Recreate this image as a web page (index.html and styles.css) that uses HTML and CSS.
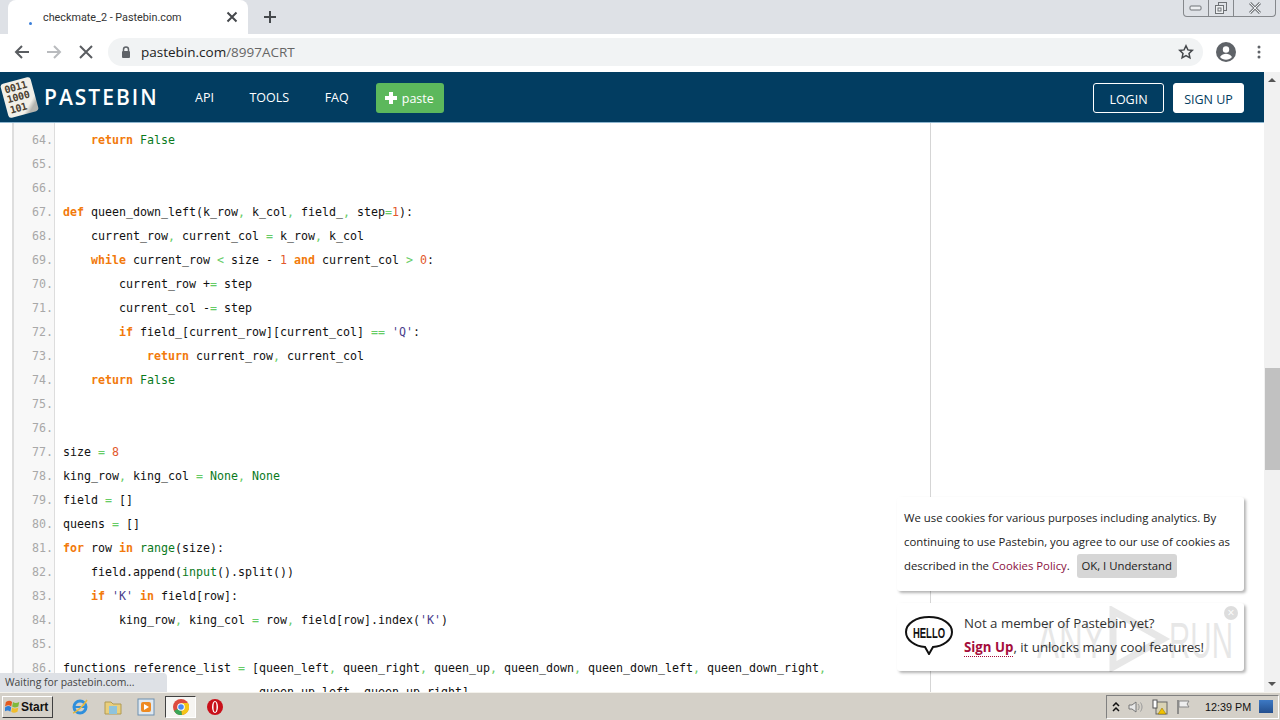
FILE: index.html
```html
<!DOCTYPE html>
<html>
<head>
  <meta charset="UTF-8">
  <title>checkmate_2 - Pastebin.com</title>
  <link rel="stylesheet" href="styles.css">
</head>
<body>
  <div class="tabstrip">
    <div class="tab">
      <span class="tab-spinner"></span>
      <span class="tab-title">checkmate_2 - Pastebin.com</span>
      <svg class="tab-close" width="12" height="12" viewBox="0 0 12 12"><path d="M1.5 1.5l9 9M10.5 1.5l-9 9" stroke="#45484c" stroke-width="2"/></svg>
    </div>
    <svg class="new-tab" width="14" height="14" viewBox="0 0 14 14"><path d="M7 1v12M1 7h12" stroke="#45484c" stroke-width="2"/></svg>
    <div class="window-buttons">
      <span class="win-btn"><svg width="14" height="8" viewBox="0 0 14 8"><rect x="1" y="2" width="11" height="4" rx="1" fill="#eef0f2" stroke="#6f7276"/></svg></span>
      <span class="win-btn"><svg width="14" height="14" viewBox="0 0 14 14"><rect x="4.5" y="1.5" width="8" height="8" fill="none" stroke="#6f7276"/><rect x="1.5" y="4.5" width="8" height="8" fill="#eef0f2" stroke="#6f7276"/><rect x="4" y="7" width="3" height="3" fill="none" stroke="#6f7276"/></svg></span>
      <span class="win-btn wide"><svg width="14" height="12" viewBox="0 0 14 12"><path d="M2 1l10 10M12 1L2 11" stroke="#7d8084" stroke-width="3"/><path d="M2 1l10 10M12 1L2 11" stroke="#eef0f2" stroke-width="1"/></svg></span>
    </div>
  </div>

  <div class="toolbar">
    <svg class="nav-icon" width="16" height="16" viewBox="0 0 16 16"><path d="M15 8H2M8 2L2 8l6 6" fill="none" stroke="#5a5d61" stroke-width="2"/></svg>
    <svg class="nav-icon" width="16" height="16" viewBox="0 0 16 16"><path d="M1 8h13M8 2l6 6-6 6" fill="none" stroke="#b9bbbe" stroke-width="2"/></svg>
    <svg class="nav-icon" width="16" height="16" viewBox="0 0 16 16"><path d="M2 2l12 12M14 2L2 14" stroke="#5a5d61" stroke-width="2"/></svg>
    <div class="omnibox">
      <svg class="lock" width="12" height="14" viewBox="0 0 12 14"><path d="M3.500 6V4.500a2.500 2.500 0 0 1 5 0V6" fill="none" stroke="#5f6368" stroke-width="1.5"/><rect x="2" y="6" width="8" height="7" rx="1" fill="#5f6368"/></svg>
      <span class="url">pastebin.com<span class="url-path">/8997ACRT</span></span>
      <svg class="star" width="16" height="16" viewBox="0 0 16 16"><path d="M8 1.8l1.9 4.1 4.4.5-3.3 3 .9 4.4L8 11.6l-3.9 2.2.9-4.4-3.3-3 4.4-.5z" fill="none" stroke="#45484c" stroke-width="1.5"/></svg>
    </div>
    <svg class="avatar" width="20" height="20" viewBox="0 0 20 20"><circle cx="10" cy="10" r="10" fill="#5f6368"/><circle cx="10" cy="7.5" r="3.2" fill="#fff"/><path d="M4 15c1.5-2.6 3.8-3.3 6-3.3s4.500.7 6 3.300c-1.500 1.700-3.600 2.700-6 2.700s-4.500-1-6-2.700z" fill="#fff"/></svg>
    <svg class="menu-dots" width="4" height="14" viewBox="0 0 4 14"><circle cx="2" cy="2" r="1.500" fill="#5f6368"/><circle cx="2" cy="7" r="1.500" fill="#5f6368"/><circle cx="2" cy="12" r="1.500" fill="#5f6368"/></svg>
  </div>

  <div class="viewport">
    <div class="page">
      <div class="site-header">
        <div class="logo">
          <div class="logo-mark"><span>0011</span><span>1000</span><span>101</span></div>
          <span class="logo-text">PASTEBIN</span>
        </div>
        <nav class="site-nav">
          <a>API</a>
          <a>TOOLS</a>
          <a>FAQ</a>
        </nav>
        <a class="paste-btn"><svg width="14" height="14" viewBox="0 0 14 14"><path d="M7 1v12M1 7h12" stroke="#fff" stroke-width="4"/></svg>paste</a>
        <div class="account">
          <a class="login-btn">LOGIN</a>
          <a class="signup-btn">SIGN UP</a>
        </div>
      </div>

      <div class="page-body">
        <div class="code-box">
          <div class="line"><span class="num">64.</span><code>    <b>return</b> <i>False</i></code></div>
          <div class="line"><span class="num">65.</span><code></code></div>
          <div class="line"><span class="num">66.</span><code></code></div>
          <div class="line"><span class="num">67.</span><code><b>def</b> queen_down_left(k_row<u>,</u> k_col<u>,</u> field_<u>,</u> step<u>=</u><em>1</em>):</code></div>
          <div class="line"><span class="num">68.</span><code>    current_row<u>,</u> current_col <u>=</u> k_row<u>,</u> k_col</code></div>
          <div class="line"><span class="num">69.</span><code>    <b>while</b> current_row <u>&lt;</u> size - <em>1</em> <b>and</b> current_col <u>&gt;</u> <em>0</em>:</code></div>
          <div class="line"><span class="num">70.</span><code>        current_row +<u>=</u> step</code></div>
          <div class="line"><span class="num">71.</span><code>        current_col -<u>=</u> step</code></div>
          <div class="line"><span class="num">72.</span><code>        <b>if</b> field_[current_row][current_col] <u>==</u> <s>'Q'</s>:</code></div>
          <div class="line"><span class="num">73.</span><code>            <b>return</b> current_row<u>,</u> current_col</code></div>
          <div class="line"><span class="num">74.</span><code>    <b>return</b> <i>False</i></code></div>
          <div class="line"><span class="num">75.</span><code></code></div>
          <div class="line"><span class="num">76.</span><code></code></div>
          <div class="line"><span class="num">77.</span><code>size <u>=</u> <em>8</em></code></div>
          <div class="line"><span class="num">78.</span><code>king_row<u>,</u> king_col <u>=</u> <i>None</i><u>,</u> <i>None</i></code></div>
          <div class="line"><span class="num">79.</span><code>field <u>=</u> []</code></div>
          <div class="line"><span class="num">80.</span><code>queens <u>=</u> []</code></div>
          <div class="line"><span class="num">81.</span><code><b>for</b> row <b>in</b> <i>range</i>(size):</code></div>
          <div class="line"><span class="num">82.</span><code>    field.append(<i>input</i>().split())</code></div>
          <div class="line"><span class="num">83.</span><code>    <b>if</b> <s>'K'</s> <b>in</b> field[row]:</code></div>
          <div class="line"><span class="num">84.</span><code>        king_row<u>,</u> king_col <u>=</u> row<u>,</u> field[row].index(<s>'K'</s>)</code></div>
          <div class="line"><span class="num">85.</span><code></code></div>
          <div class="line"><span class="num">86.</span><code>functions_reference_list <u>=</u> [queen_left<u>,</u> queen_right<u>,</u> queen_up<u>,</u> queen_down<u>,</u> queen_down_left<u>,</u> queen_down_right<u>,</u></code></div>
          <div class="line"><span class="num"></span><code>                            queen_up_left<u>,</u> queen_up_right]</code></div>
        </div>
        <div class="sidebar"></div>
      </div>

      <div class="notice cookie-notice">
        We use cookies for various purposes including analytics. By continuing to use Pastebin, you agree to our use of cookies as described in the <a class="cookie-link">Cookies Policy</a>. <span class="cookie-ok">OK, I Understand</span>
      </div>
      <div class="notice member-notice">
        <svg class="hello" width="50" height="40" viewBox="0 0 50 40">
          <path d="M25 2C12 2 2 8.500 2 17c0 8 9 14.500 19 15l4 7 4-7c10-.5 19-7 19-15C48 8.500 38 2 25 2z" fill="#fff" stroke="#111" stroke-width="2"/>
          <text x="25" y="23" class="hello-text" text-anchor="middle" textLength="32" lengthAdjust="spacingAndGlyphs">HELLO</text>
        </svg>
        <div>
          <div>Not a member of Pastebin yet?</div>
          <div><a class="signup-link">Sign Up</a>, it unlocks many cool features!</div>
        </div>
        <span class="notice-close">×</span>
      </div>
    </div>

    <div class="scrollbar">
      <span class="arrow-up"></span>
      <div class="scroll-track"><div class="scroll-thumb"></div></div>
      <span class="arrow-down"></span>
    </div>

    <div class="status-bubble">Waiting for pastebin.com...</div>
    <svg class="watermark" width="200" height="66" viewBox="0 0 200 66">
      <text x="0" y="52" textLength="68" lengthAdjust="spacingAndGlyphs">ANY</text>
      <path d="M76 5l50 28-50 28z" fill="none" stroke="#000" stroke-width="7"/>
      <text x="132" y="52" textLength="64" lengthAdjust="spacingAndGlyphs">RUN</text>
    </svg>
  </div>

  <div class="taskbar">
    <div class="start-btn">
      <svg width="16" height="15" viewBox="0 0 18 16">
        <path d="M1 3c3-2 5-2 7 0l-1 5c-2-2-4-2-7 0z" fill="#e2591f"/>
        <path d="M9 3c2 1.500 4 1.500 7 0l-1 5c-3 1.500-5 1.500-7 0z" fill="#7fb93a"/>
        <path d="M0 9c3-2 5-2 7 0l-1 5c-2-2-4-2-7 0z" fill="#2f7fd6"/>
        <path d="M8 9c2 1.500 4 1.500 7 0l-1 5c-3 1.500-5 1.500-7 0z" fill="#f0bd2c"/>
      </svg>
      <span>Start</span>
    </div>
    <div class="quick-launch">
      <span class="task-slot"><svg width="18" height="18" viewBox="0 0 18 18"><circle cx="9" cy="9" r="6" fill="none" stroke="#2f8fdc" stroke-width="3"/><path d="M3 9h12" stroke="#2f8fdc" stroke-width="2"/><path d="M2 15C6 14 13 7 16 2" fill="none" stroke="#e8b93c" stroke-width="1.500"/></svg></span>
      <span class="task-slot"><svg width="18" height="18" viewBox="0 0 18 18"><path d="M1 4h6l2 2h8v10H1z" fill="#e9cf7d" stroke="#b09a55"/><rect x="5" y="8" width="8" height="8" fill="#8ec3dc"/></svg></span>
      <span class="task-slot"><svg width="18" height="18" viewBox="0 0 18 18"><rect x="1" y="1" width="16" height="16" fill="#dfe8f0" stroke="#6c8fb0"/><rect x="4" y="4" width="10" height="10" rx="2" fill="#ee8a22"/><path d="M7 6l5 3-5 3z" fill="#fff"/></svg></span>
      <span class="task-slot active"><svg width="16" height="16" viewBox="0 0 16 16"><circle cx="8" cy="8" r="8" fill="#dd4b3e"/><path d="M8 8L1 12a8 8 0 0 0 8 4z" fill="#3aa757"/><path d="M8 4h7a8 8 0 0 1-6 12z" fill="#f5c518"/><circle cx="8" cy="8" r="3.800" fill="#fff"/><circle cx="8" cy="8" r="2.800" fill="#4a8af4"/></svg></span>
      <span class="task-slot"><svg width="18" height="18" viewBox="0 0 18 18"><circle cx="9" cy="9" r="8" fill="#c9101a"/><ellipse cx="9" cy="9" rx="3" ry="6" fill="#fff"/><ellipse cx="9" cy="9" rx="1.500" ry="5" fill="#c9101a"/></svg></span>
    </div>
    <div class="tray">
      <svg width="8" height="10" viewBox="0 0 8 10"><path d="M1 4l3-3 3 3M1 9l3-3 3 3" fill="none" stroke="#111" stroke-width="1.500"/></svg>
      <svg width="16" height="14" viewBox="0 0 16 14"><path d="M1 5h3l4-3v10L4 9H1z" fill="#e8e8e8" stroke="#777"/><path d="M10 4c1.500 2 1.500 4 0 6M12.500 2.500c2 3 2 6 0 9" fill="none" stroke="#999"/></svg>
      <svg width="16" height="16" viewBox="0 0 16 16"><rect x="4" y="3" width="11" height="12" fill="#d9d2b4" stroke="#666"/><rect x="1" y="1" width="4" height="8" fill="#fff" stroke="#555"/><path d="M10 9l4 6H6z" fill="#f2c200" stroke="#8a6d00" stroke-width=".5"/></svg>
      <svg width="16" height="16" viewBox="0 0 16 16"><path d="M2 1v14" stroke="#777" stroke-width="1.500"/><path d="M3 2h10l-2 3 2 3H3z" fill="#eee" stroke="#888"/></svg>
      <span class="clock">12:39 PM</span>
      <span class="show-desktop"></span>
    </div>
  </div>
</body>
</html>
```

FILE: styles.css
```css
* {
  box-sizing: border-box;
}

html, body {
  margin: 0;
  height: 720px;
  overflow: hidden;
}

body {
  display: flex;
  flex-direction: column;
  font-family: "Open Sans", sans-serif;
  background-color: #fff;
}

/* browser window */
.tabstrip {
  position: relative;
  display: flex;
  align-items: flex-end;
  height: 34px;
  padding-left: 8px;
  background-color: #dee1e6;
  flex-shrink: 0;
}

.tab {
  display: flex;
  align-items: center;
  width: 240px;
  height: 34px;
  padding: 0 10px 0 35px;
  background-color: #fff;
  border-radius: 8px 8px 0 0;
  position: relative;
}

.tab-spinner {
  position: absolute;
  left: 21px;
  top: 22px;
  width: 3px;
  height: 3px;
  border-radius: 50%;
  background-color: #3b7fd9;
}

.tab-title {
  flex: 1;
  font-family: Roboto, sans-serif;
  font-size: 10.8px;
  color: #333;
}

.new-tab {
  margin: 0 0 10px 15px;
}

.window-buttons {
  position: absolute;
  top: 0;
  right: 4px;
  display: flex;
  height: 17px;
  border: 1px solid #85888c;
  border-top: none;
  border-radius: 0 0 4px 4px;
}

.win-btn {
  display: flex;
  align-items: center;
  justify-content: center;
  width: 25px;
  border-right: 1px solid #85888c;
}

.win-btn.wide {
  width: 41px;
  border-right: none;
}

.toolbar {
  display: flex;
  align-items: center;
  height: 38px;
  padding: 0 0 2px 14px;
  background-color: #fff;
  flex-shrink: 0;
}

.nav-icon {
  margin-right: 16px;
}

.omnibox {
  display: flex;
  align-items: center;
  width: 1095px;
  height: 28px;
  margin: 0 13px 0 -2px;
  padding: 0 9px 0 12px;
  background-color: #f1f3f4;
  border-radius: 14px;
}

.lock {
  margin-right: 9px;
}

.url {
  flex: 1;
  font-size: 13.5px;
  color: #222;
}

.url-path {
  color: #666;
}

.avatar {
  margin-right: 21px;
}

/* page */
.viewport {
  position: relative;
  display: flex;
  flex: 1;
  min-height: 0;
  overflow: hidden;
}

.page {
  position: relative;
  flex: 1;
  display: flex;
  flex-direction: column;
  overflow: hidden;
}

.site-header {
  display: flex;
  align-items: center;
  height: 51px;
  padding-right: 20px;
  background-color: #023d61;
  border-bottom: 1px solid #8fb6cf;
  flex-shrink: 0;
}

.logo {
  display: flex;
  align-items: center;
  width: 195px;
}

.logo-mark {
  display: flex;
  flex-direction: column;
  justify-content: center;
  width: 31px;
  height: 35px;
  margin: 0 9px 0 4px;
  padding-left: 3px;
  background: linear-gradient(135deg, #f1efe8 75%, #b5b5b0 85%);
  border-radius: 3px;
  transform: rotate(-15deg);
  font-family: "DejaVu Sans Mono", monospace;
  font-size: 10px;
  font-weight: bold;
  line-height: 10.5px;
  letter-spacing: -0.3px;
  color: #4a4030;
}

.logo-text {
  font-family: "Open Sans", sans-serif;
  font-size: 21px;
  font-weight: 600;
  letter-spacing: 2px;
  color: #fff;
}

.site-nav {
  display: flex;
  gap: 35.5px;
  font-size: 12.5px;
  color: #fff;
}

.paste-btn {
  display: flex;
  align-items: center;
  gap: 4px;
  width: 68px;
  height: 30px;
  margin: 2px 0 0 27px;
  padding-left: 8px;
  background-color: #5cb85c;
  border-radius: 3px;
  font-size: 12.5px;
  color: #fff;
}

.account {
  display: flex;
  gap: 9px;
  margin: 2px 0 0 auto;
}

.login-btn,
.signup-btn {
  width: 71px;
  height: 30px;
  border: 1px solid #fff;
  border-radius: 3px;
  font-size: 12.5px;
  line-height: 31px;
  text-align: center;
}

.login-btn {
  color: #fff;
}

.signup-btn {
  background-color: #fff;
  color: #023d61;
}

.page-body {
  display: flex;
  flex: 1;
  min-height: 0;
  padding-left: 12px;
}

.code-box {
  width: 919px;
  padding-top: 5px;
  border-left: 2px solid #dedede;
  border-right: 1px solid #d5d5d5;
  background: linear-gradient(to right, #f8f8f8 40px, #ddd 40px, #ddd 41px, #fff 41px);
}

.line {
  display: flex;
  height: 24px;
  font-family: "DejaVu Sans Mono", monospace;
  font-size: 11.63px;
  line-height: 24px;
}

.num {
  width: 39px;
  text-align: right;
  color: #a8a8a8;
  flex-shrink: 0;
}

.line code {
  padding-left: 10px;
  font-family: inherit;
  white-space: pre;
  color: #111;
}

.line b {
  color: #f27a0c;
}

.line i {
  font-style: normal;
  color: #0a7a1c;
}

.line u {
  text-decoration: none;
  color: #66cc66;
}

.line em {
  font-style: normal;
  color: #e2572b;
}

.line s {
  text-decoration: none;
  color: #483d8b;
}

.sidebar {
  flex: 1;
}

/* notices */
.notice {
  position: absolute;
  left: 897px;
  width: 347px;
  background-color: #fff;
  box-shadow: 2px 2px 3px rgba(0, 0, 0, 0.3);
  border-radius: 3px;
  color: #222;
}

.cookie-notice {
  top: 425px;
  height: 94px;
  padding: 9px 8px 0 7px;
  font-size: 11.35px;
  line-height: 24px;
}

.cookie-link {
  color: #8c1242;
}

.cookie-ok {
  display: inline-block;
  width: 100px;
  height: 24px;
  margin-left: 4px;
  background-color: #d6d6d6;
  border-radius: 3px;
  text-align: center;
  color: #222;
}

.member-notice {
  top: 531px;
  height: 68px;
  display: flex;
  align-items: center;
  gap: 10px;
  padding: 0 0 4px 7px;
  font-size: 13.25px;
  line-height: 24px;
  color: #333;
}

.hello {
  flex-shrink: 0;
}

.hello-text {
  font-family: "Liberation Sans", sans-serif;
  font-size: 14px;
  font-weight: bold;
  fill: #111;
}

.signup-link {
  font-weight: bold;
  color: #a50d3c;
  border-bottom: 1px dotted #a50d3c;
}

.notice-close {
  position: absolute;
  top: 3px;
  right: 6px;
  width: 14px;
  height: 14px;
  border-radius: 50%;
  background-color: #ddd;
  font-size: 12px;
  line-height: 13px;
  text-align: center;
  color: #fff;
}

.status-bubble {
  position: absolute;
  left: 0;
  bottom: 0;
  width: 167px;
  height: 19px;
  padding-left: 5px;
  background-color: #dee1e6;
  border-top-right-radius: 4px;
  font-size: 10.4px;
  line-height: 19px;
  color: #444;
}

.watermark {
  position: absolute;
  top: 534px;
  left: 1037px;
  opacity: 0.09;
  font-family: "Liberation Sans", sans-serif;
  font-size: 50px;
}

/* scrollbar */
.scrollbar {
  display: flex;
  flex-direction: column;
  align-items: center;
  width: 16px;
  background-color: #f1f1f1;
  flex-shrink: 0;
}

.arrow-up,
.arrow-down {
  flex-shrink: 0;
  width: 0;
  height: 0;
  margin: 6px 0;
  border-left: 4px solid transparent;
  border-right: 4px solid transparent;
}

.arrow-up {
  border-bottom: 4px solid #555;
}

.arrow-down {
  border-top: 4px solid #555;
}

.scroll-track {
  flex: 1;
  width: 100%;
  padding-top: 280px;
}

.scroll-thumb {
  height: 102px;
  margin-left: 1px;
  background-color: #c1c1c1;
}

/* windows taskbar */
.taskbar {
  display: flex;
  align-items: center;
  height: 28px;
  background-color: #d4d0c8;
  border-top: 1px solid #f4f2ec;
  flex-shrink: 0;
}

.start-btn {
  display: flex;
  align-items: center;
  width: 51px;
  height: 22px;
  margin-left: 2px;
  padding-left: 2px;
  background-color: #d4d0c8;
  border: 1px solid;
  border-color: #fff #404040 #404040 #fff;
  font-family: "Liberation Sans", sans-serif;
  font-size: 12px;
  font-weight: bold;
  color: #111;
}

.quick-launch {
  display: flex;
  align-items: center;
  gap: 5px;
  margin-left: 13px;
}

.task-slot {
  display: flex;
  align-items: center;
  justify-content: center;
  width: 28px;
  height: 22px;
}

.task-slot.active {
  width: 31px;
  background-color: #f6f5f2;
  border: 1px solid;
  border-color: #404040 #fff #fff #404040;
}

.tray {
  display: flex;
  align-items: center;
  gap: 8px;
  width: 173px;
  height: 24px;
  margin: 0 1px 0 auto;
  padding-left: 5px;
  border: 1px solid;
  border-color: #808080 #fff #fff #808080;
  font-family: "Liberation Sans", sans-serif;
  font-size: 10.8px;
  color: #111;
}

.clock {
  margin-left: 5px;
}

.show-desktop {
  width: 14px;
  height: 13px;
  background: linear-gradient(#3d79c4, #244f8e);
}
```
